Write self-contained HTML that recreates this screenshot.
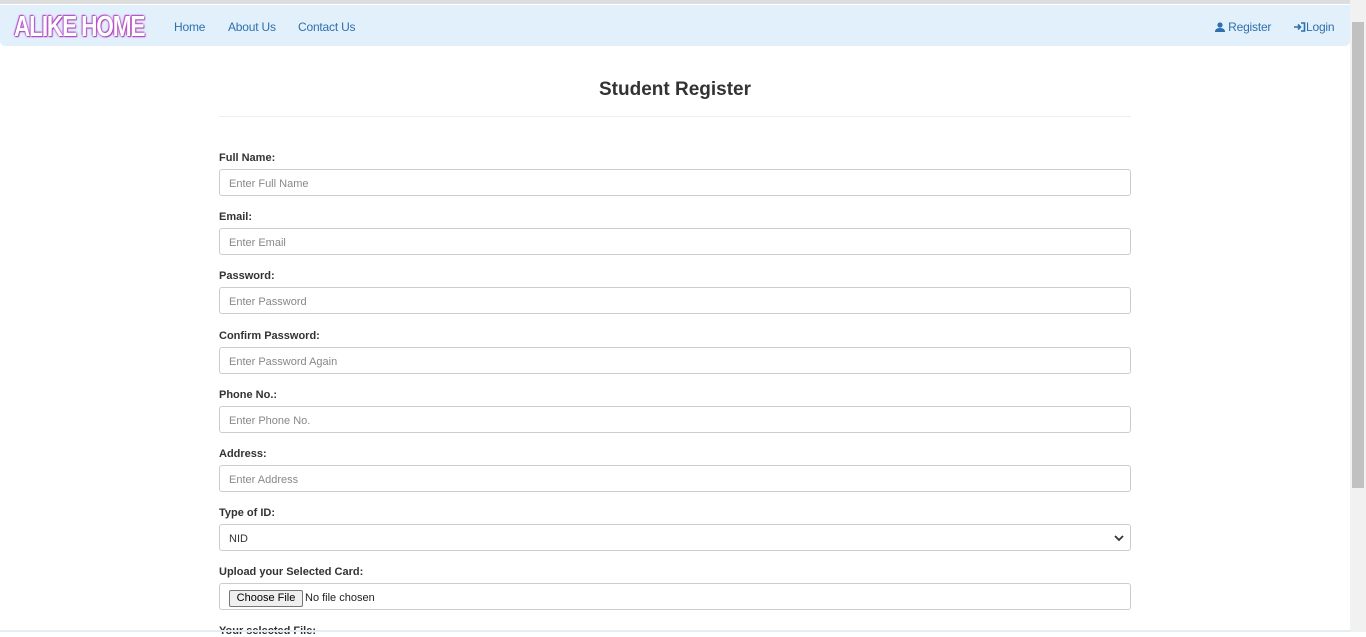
<!DOCTYPE html>
<html><head><style>
body{margin:0;width:1366px;height:632px;overflow:hidden;background:#fff;font-family:"Liberation Sans",Arial,sans-serif;position:relative}
.top{position:absolute;left:0;top:0;width:1350px;height:4px;background:#ddd}
.nav{position:absolute;left:0;top:5px;width:1350px;height:41px;background:#e1f0fb;border-radius:0 0 5px 5px}
.logo{position:absolute;left:14px;top:7px;font:bold 29px/30px "Liberation Sans",sans-serif;color:#fff;letter-spacing:-1.5px;transform:scaleX(0.78);transform-origin:left;text-shadow:0 0 2px #b040c0,0 0 3px #c060d0,1px 1px 1px #a030b0,-1px -1px 1px #b040c0}
.nl{position:absolute;top:20px;font-size:12px;color:#2f6fae;letter-spacing:-0.2px}
.scroll{position:absolute;left:1350px;top:0;width:16px;height:632px;background:#f1f1f1}
.thumb{position:absolute;left:1352px;top:22px;width:12px;height:466px;background:#c1c1c1}
h1{position:absolute;left:0;width:1350px;top:79px;margin:0;text-align:center;font-size:19px;font-weight:bold;color:#333}
.hr{position:absolute;left:219px;width:912px;top:116px;height:1px;background:#eee}
.lb{position:absolute;left:219px;font-size:11px;font-weight:bold;color:#333}
.in{position:absolute;left:219px;width:910px;height:25px;border:1px solid #ccc;border-radius:3px;font-size:11px;color:#888;line-height:29px;text-indent:9px;box-sizing:content-box}
</style></head><body>
<div class="top"></div>
<div class="nav">
<div class="logo">ALIKE HOME</div>
<span class="nl" style="left:174px;top:15px">Home</span>
<span class="nl" style="left:228px;top:15px">About Us</span>
<span class="nl" style="left:298px;top:15px">Contact Us</span>
<span class="nl" style="left:1215px;top:15px"><svg width="10" height="10" viewBox="0 0 10 10" style="vertical-align:-1px"><circle cx="5" cy="3" r="2.6" fill="#2f6fae"/><path d="M0 10 Q0 6 5 6 Q10 6 10 10Z" fill="#2f6fae"/></svg> Register</span>
<span class="nl" style="left:1294px;top:15px"><svg width="12" height="10" viewBox="0 0 12 10" style="vertical-align:-1px"><path d="M0 5H6M4 2.5L6.5 5L4 7.5M7 1H10.5V9H7" stroke="#2f6fae" stroke-width="1.6" fill="none"/></svg>Login</span>
</div>
<div class="scroll"></div><div class="thumb"></div>
<h1>Student Register</h1>
<div class="hr"></div>
<div class="lb" style="top:152px">Full Name:</div><div class="in" style="top:169px">Enter Full Name</div>
<div class="lb" style="top:211px">Email:</div><div class="in" style="top:228px">Enter Email</div>
<div class="lb" style="top:270px">Password:</div><div class="in" style="top:287px">Enter Password</div>
<div class="lb" style="top:330px">Confirm Password:</div><div class="in" style="top:347px">Enter Password Again</div>
<div class="lb" style="top:389px">Phone No.:</div><div class="in" style="top:406px">Enter Phone No.</div>
<div class="lb" style="top:448px">Address:</div><div class="in" style="top:465px">Enter Address</div>
<div class="lb" style="top:507px">Type of ID:</div><div class="in" style="top:524px;color:#333">NID<svg style="position:absolute;right:6px;top:10px" width="10" height="7" viewBox="0 0 10 7"><path d="M1 1L5 5L9 1" stroke="#333" stroke-width="1.8" fill="none"/></svg></div>
<div class="lb" style="top:566px">Upload your Selected Card:</div>
<div class="in" style="top:583px;color:#333;text-indent:0"><span style="position:absolute;left:9px;top:6px;height:15px;width:72px;border:1px solid #767676;border-radius:2px;background:#efefef;font-size:11px;line-height:15px;text-align:center;color:#000">Choose File</span><span style="position:absolute;left:85px;top:0;font-size:11px;line-height:28px;color:#222">No file chosen</span></div>
<div class="lb" style="top:625px">Your selected File:</div>
<div style="position:absolute;left:0;top:630px;width:1350px;height:2px;background:#e0eef6"></div>
</body></html>
